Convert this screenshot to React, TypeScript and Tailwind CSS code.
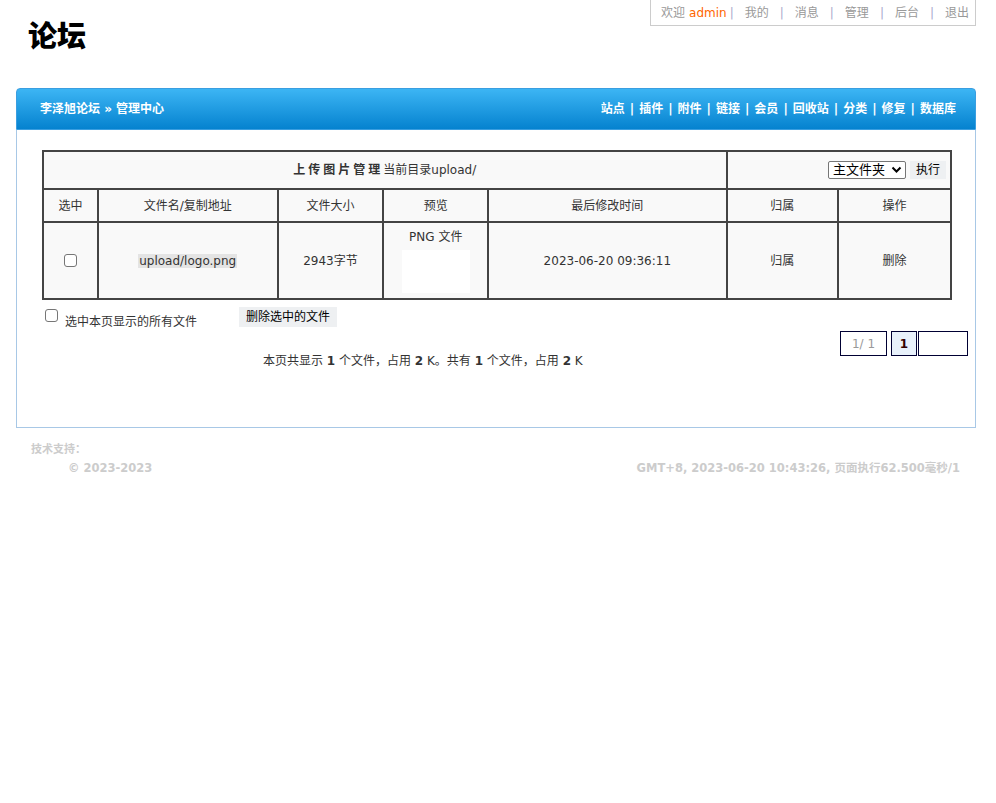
import React from "react";

const FONT = { fontFamily: '"DejaVu Sans", Verdana, "Noto Sans CJK SC", sans-serif' };

// ── Top user bar ───────────────────────────────────────────────────────────
function UserBar() {
  const links = ["我的", "消息", "管理", "后台", "退出"];
  return (
    <div className="flex justify-end pr-[20px]">
      <div className="flex h-[26px] items-center border border-t-0 border-[#ccc] pl-[10px] pr-[6px] text-[12px] text-[#999]">
        <span>欢迎</span>
        <span className="ml-[4px] text-[#ff6600]">admin</span>
        {links.map((l, i) => (
          <React.Fragment key={l}>
            <span className={`${i === 0 ? "ml-[3px]" : "ml-[11px]"} mr-[11px] text-[#aac]`}>|</span>
            <span>{l}</span>
          </React.Fragment>
        ))}
      </div>
    </div>
  );
}

// ── Blue nav header ────────────────────────────────────────────────────────
function NavHeader() {
  const items = ["站点", "插件", "附件", "链接", "会员", "回收站", "分类", "修复", "数据库"];
  return (
    <div className="flex h-[42px] items-center justify-between rounded-t-[4px] border border-[#3a9ee0] bg-[linear-gradient(#3cb5f4,#0582cf)] pl-[23px] pr-[19px] text-[12px] font-bold text-white">
      <span>李泽旭论坛 » 管理中心</span>
      <div className="flex items-center">
        {items.map((it, i) => (
          <React.Fragment key={it}>
            {i > 0 && <span className="mx-[5px]">|</span>}
            <span>{it}</span>
          </React.Fragment>
        ))}
      </div>
    </div>
  );
}

// ── File table ─────────────────────────────────────────────────────────────
function FileTable() {
  const cell = "border-2 border-[#444] text-center align-middle";
  return (
    <table className="w-[910px] border-collapse bg-[#f9f9f9] text-[12px] text-[#333]">
      <colgroup>
        <col className="w-[55px]" />
        <col className="w-[180px]" />
        <col className="w-[106px]" />
        <col className="w-[105px]" />
        <col className="w-[239px]" />
        <col className="w-[112px]" />
        <col className="w-[113px]" />
      </colgroup>
      <tbody>
        <tr className="h-[38px]">
          <td colSpan={5} className={cell}>
            <span className="font-bold tracking-[3px]">上传图片管理</span>
            <span>当前目录upload/</span>
          </td>
          <td colSpan={2} className={`${cell} text-right pr-[4px]`}>
            <div className="flex items-center justify-end gap-[4px]">
              <div className="flex h-[18px] items-center gap-[6px] rounded-[2px] border border-[#767676] bg-white pl-[4px] pr-[3px] text-[13px] text-black">
                主文件夹
                <svg width="11" height="8" viewBox="0 0 11 8">
                  <path d="M1.5 1.5 L5.5 5.5 L9.5 1.5" fill="none" stroke="#000" strokeWidth="2" />
                </svg>
              </div>
              <div className="flex h-[18px] items-center bg-[#eef0f2] px-[6px] text-[12px] text-black">执行</div>
            </div>
          </td>
        </tr>
        <tr className="h-[33px]">
          {["选中", "文件名/复制地址", "文件大小", "预览", "最后修改时间", "归属", "操作"].map((h) => (
            <td key={h} className={cell}>{h}</td>
          ))}
        </tr>
        <tr className="h-[77px]">
          <td className={cell}>
            <div className="mx-auto h-[13px] w-[13px] rounded-[3px] border border-[#767676] bg-white" />
          </td>
          <td className={cell}>
            <span className="bg-[#e4e4e4] px-[1px]">upload/logo.png</span>
          </td>
          <td className={cell}>2943字节</td>
          <td className={`${cell} align-top pt-[5px]`}>
            <div>PNG 文件</div>
            <div className="mx-auto mt-[4px] h-[43px] w-[68px] bg-white" />
          </td>
          <td className={cell}>2023-06-20 09:36:11</td>
          <td className={cell}>归属</td>
          <td className={cell}>删除</td>
        </tr>
      </tbody>
    </table>
  );
}

export default function App() {
  return (
    <div className="min-h-[803px] w-[996px] bg-white" style={FONT}>
      <UserBar />
      <div className="pl-[28px]">
        <h1
          className="-mt-[12px] text-[29px] font-black leading-[40px] text-black"
          style={{ fontFamily: '"Noto Sans CJK SC", serif' }}
        >
          论坛
        </h1>
      </div>
      <div className="ml-[16px] mr-[20px] mt-[34px]">
        <NavHeader />
        <div className="h-[298px] border border-t-0 border-[#a8c8e6] bg-white">
          <div className="pl-[25px] pt-[20px]">
            <FileTable />
            <div className="mt-[7px] flex items-start text-[12px] text-[#333]">
              <div className="ml-[3px] mt-[2px] h-[13px] w-[13px] rounded-[3px] border border-[#767676] bg-white" />
              <span className="ml-[7px] mt-[6px]">选中本页显示的所有文件</span>
              <span className="ml-[42px] bg-[#eef0f2] px-[7px] py-[1px] text-black">删除选中的文件</span>
            </div>
          </div>
          <div className="flex items-start pr-[7px]">
            <div className="flex-1 pl-[246px] pt-[21px] text-[12px] text-[#333]">
              本页共显示 <b>1</b> 个文件，占用 <b>2</b> K。共有 <b>1</b> 个文件，占用 <b>2</b> K
            </div>
            <div className="flex gap-[4px] text-[12px]">
              <div className="flex h-[25px] w-[47px] items-center justify-center border border-[#000033] text-[#999]">1/ 1</div>
              <div className="flex h-[25px] w-[26px] items-center justify-center border border-[#000033] bg-[#e8f1fb] font-bold text-[#330000]">1</div>
              <div className="-ml-[3px] h-[25px] w-[50px] border border-[#000033]" />
            </div>
          </div>
        </div>
      </div>
      <div className="pl-[31px] pt-[14px] text-[11px] font-bold text-[#ccc]">技术支持：</div>
      <div className="mt-[1px] flex justify-between pl-[68px] pr-[36px] text-[11.5px] font-bold text-[#ccc]">
        <span>© 2023-2023</span>
        <span>GMT+8, 2023-06-20 10:43:26, 页面执行62.500毫秒/1</span>
      </div>
    </div>
  );
}
